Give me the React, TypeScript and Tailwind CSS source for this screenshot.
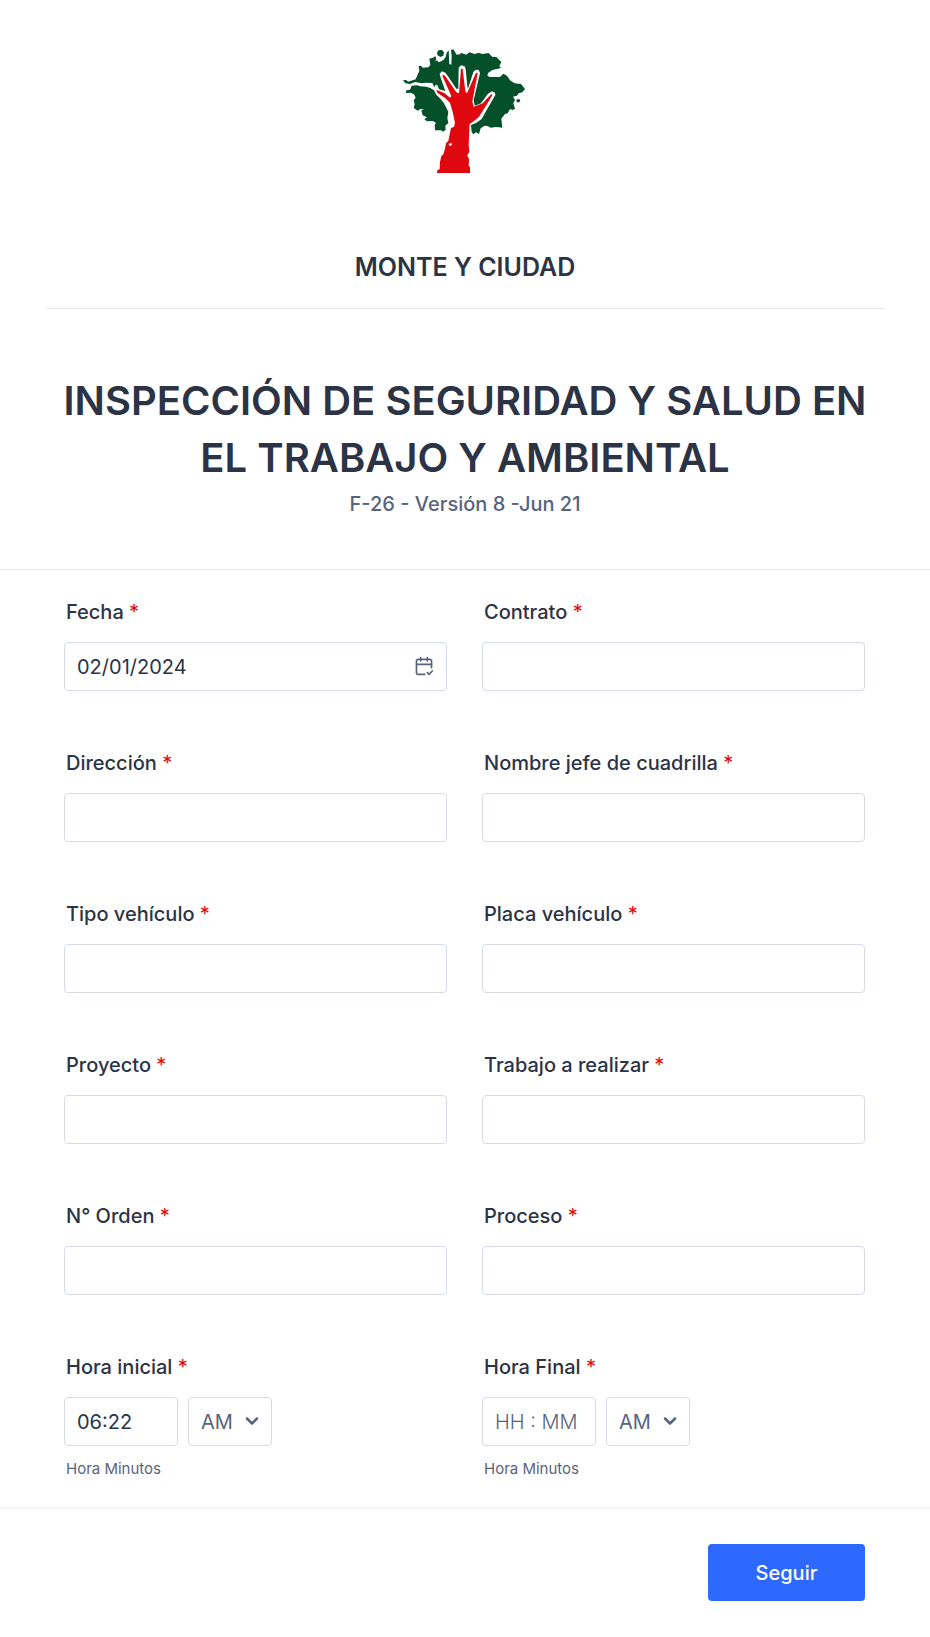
import { CalendarCheck2, ChevronDown } from 'lucide-react';
import type { ReactNode } from 'react';

const inputClass =
  'h-[49px] w-full rounded border border-[#d6dbe7] bg-white px-3 text-xl text-[#2c3345] outline-none placeholder:font-light placeholder:text-[#57647e] focus:border-[#2e69ff]';

const textFields = [
  { id: 'contrato', label: 'Contrato' },
  { id: 'direccion', label: 'Dirección' },
  { id: 'jefe', label: 'Nombre jefe de cuadrilla' },
  { id: 'tipo', label: 'Tipo vehículo' },
  { id: 'placa', label: 'Placa vehículo' },
  { id: 'proyecto', label: 'Proyecto' },
  { id: 'trabajo', label: 'Trabajo a realizar' },
  { id: 'orden', label: 'N° Orden' },
  { id: 'proceso', label: 'Proceso' }
];

function Logo() {
  return (
    <svg aria-hidden="true" className="size-[140px]" viewBox="0 0 420 420">
      <path
        d="M24 121 L34 120 L39 125 L62 118 L73 92 L71 78 L77 77 L84 83 L100 82 L106 75 L103 56 L114 53 L121 49 L124 55 L120 65 L134 66 L145 60 L152 51 L155 38 L161 31 L163 72 L169 74 L170 48 L168 30 L175 28 L185 44 L196 43 L197 38 L214 44 L223 37 L239 42 L251 38 L262 42 L281 39 L291 50 L304 51 L313 60 L319 66 L313 78 L318 84 L292 90 L280 98 L277 106 L283 111 L315 111 L325 101 L336 107 L345 121 L359 130 L378 132 L390 147 L382 157 L371 160 L366 167 L354 170 L360 180 L355 190 L360 206 L353 210 L345 207 L338 220 L330 222 L319 236 L322 263 L312 262 L302 261 L287 263 L278 258 L269 257 L257 265 L252 282 L243 277 L235 283 L230 276 L228 255 L243 249 L260 237 L278 205 L301 165 L300 158 L291 154 L279 161 L258 190 L239 197 L236 180 L243 151 L255 99 L251 90 L242 89 L235 96 L219 146 L217 139 L212 88 L209 79 L198 76 L191 83 L190 146 L184 146 L159 109 L151 98 L141 94 L134 101 L137 113 L151 153 L132 148 L127 136 L122 134 L118 142 L112 129 L91 128 L81 130 L60 126 L45 132 L31 130 Z"
        fill="#04502a"
      />
      <path
        d="M50 137 L66 136 L76 139 L94 140 L106 144 L117 151 L124 164 L137 177 L147 190 L160 215 L157 235 L160 249 L151 257 L152 269 L144 275 L138 271 L120 271 L119 255 L123 249 L114 243 L96 244 L88 238 L96 232 L83 226 L79 211 L87 207 L76 207 L68 212 L56 204 L59 193 L56 181 L62 173 L57 163 L47 158 L33 159 L34 151 L45 149 Z"
        fill="#04502a"
      />
      <path
        d="M130 31 L141 30 L147 37 L145 47 L136 51 L128 46 L126 39 Z M120 63 L127 61 L129 66 L121 68 Z M365 178 L374 178 L376 184 L369 188 L364 184 Z"
        fill="#04502a"
      />
      <path
        d="M124 149 L149 160 L165 173 L169 169 L160 148 L142 108 L144 104 L150 107 L184 157 L192 160 L198 86 L203 86 L211 154 L216 160 L243 98 L248 100 L232 184 L236 200 L263 190 L289 162 L292 166 L272 199 L252 230 L241 240 L224 252 L222 292 L221 316 L223 335 L217 346 L222 357 L221 378 L225 381 L225 399 L126 399 L127 390 L134 388 L135 366 L139 348 L145 343 L149 330 L153 310 L160 302 L163 288 L168 264 L177 260 L180 249 L173 216 L165 188 L151 175 L127 158 Z"
        fill="#df080f"
      />
      <path d="M161 311 L170 309 L171 315 L163 318 Z" fill="#fff" />
    </svg>
  );
}

function Field({ id, label, children }: { id: string; label: string; children: ReactNode }) {
  return (
    <div>
      <label className="mb-[18px] block pl-0.5 text-xl/6 font-medium" htmlFor={id}>
        {label} <span className="font-normal text-[#df0808]">*</span>
      </label>
      {children}
    </div>
  );
}

function TimeField({ id, label, value }: { id: string; label: string; value?: string }) {
  return (
    <Field id={id} label={label}>
      <div className="flex gap-2.5">
        <div className="w-[114px]">
          <input className={inputClass} defaultValue={value} id={id} placeholder="HH : MM" type="text" />
        </div>
        <div className="relative w-[84px]">
          <select
            aria-label={`${label} AM/PM`}
            className="h-[49px] w-full appearance-none rounded border border-[#d6dbe7] bg-white pl-3 text-xl text-[#57647e] outline-none"
            defaultValue="AM"
          >
            <option>AM</option>
            <option>PM</option>
          </select>
          <ChevronDown
            className="pointer-events-none absolute top-[14px] right-[10px] size-5 text-[#57647e]"
            strokeWidth={3}
          />
        </div>
      </div>
      <p className="mt-[11px] pl-0.5 text-[15px]/6 text-[#57647e]">Hora Minutos</p>
    </Field>
  );
}

export default function App() {
  return (
    <main className="min-h-screen bg-white font-['Inter',sans-serif] text-[#2c3345]">
      <header className="border-b border-[#e6e8ef] pb-[47px] text-center">
        <div className="mx-[46px] border-b border-[#e6e6f0] pt-10 pb-[25px]">
          <div className="flex justify-center">
            <Logo />
          </div>
          <h2 className="mt-[71px] text-[25px]/8 font-semibold">MONTE Y CIUDAD</h2>
        </div>
        <div className="mx-auto max-w-[838px] px-4 pt-[63px]">
          <h1 className="text-[40px]/[57px] font-semibold">INSPECCIÓN DE SEGURIDAD Y SALUD EN EL TRABAJO Y AMBIENTAL</h1>
          <p className="text-xl/9 text-[#57647e] font-medium">F-26 - Versión 8 -Jun 21</p>
        </div>
      </header>

      <form>
        <div className="grid grid-cols-2 gap-x-[35px] gap-y-[60px] pt-[30px] pr-[65px] pb-[26px] pl-16">
          <Field id="fecha" label="Fecha">
            <div className="relative">
              <input className={inputClass} defaultValue="02/01/2024" id="fecha" type="text" />
              <button
                aria-label="Elegir fecha"
                className="absolute top-[14px] right-[13px] text-[#57647e]"
                type="button"
              >
                <CalendarCheck2 className="size-5" />
              </button>
            </div>
          </Field>
          {textFields.map((field) => (
            <Field id={field.id} key={field.id} label={field.label}>
              <input className={inputClass} id={field.id} type="text" />
            </Field>
          ))}
          <TimeField id="hora-inicial" label="Hora inicial" value="06:22" />
          <TimeField id="hora-final" label="Hora Final" />
        </div>
        <div className="flex justify-end border-t-2 border-[#f3f3fe] px-[65px] py-[35px]">
          <button className="h-[57px] w-[157px] rounded-sm bg-[#2e69ff] text-xl font-medium text-white" type="submit">
            Seguir
          </button>
        </div>
      </form>
    </main>
  );
}
